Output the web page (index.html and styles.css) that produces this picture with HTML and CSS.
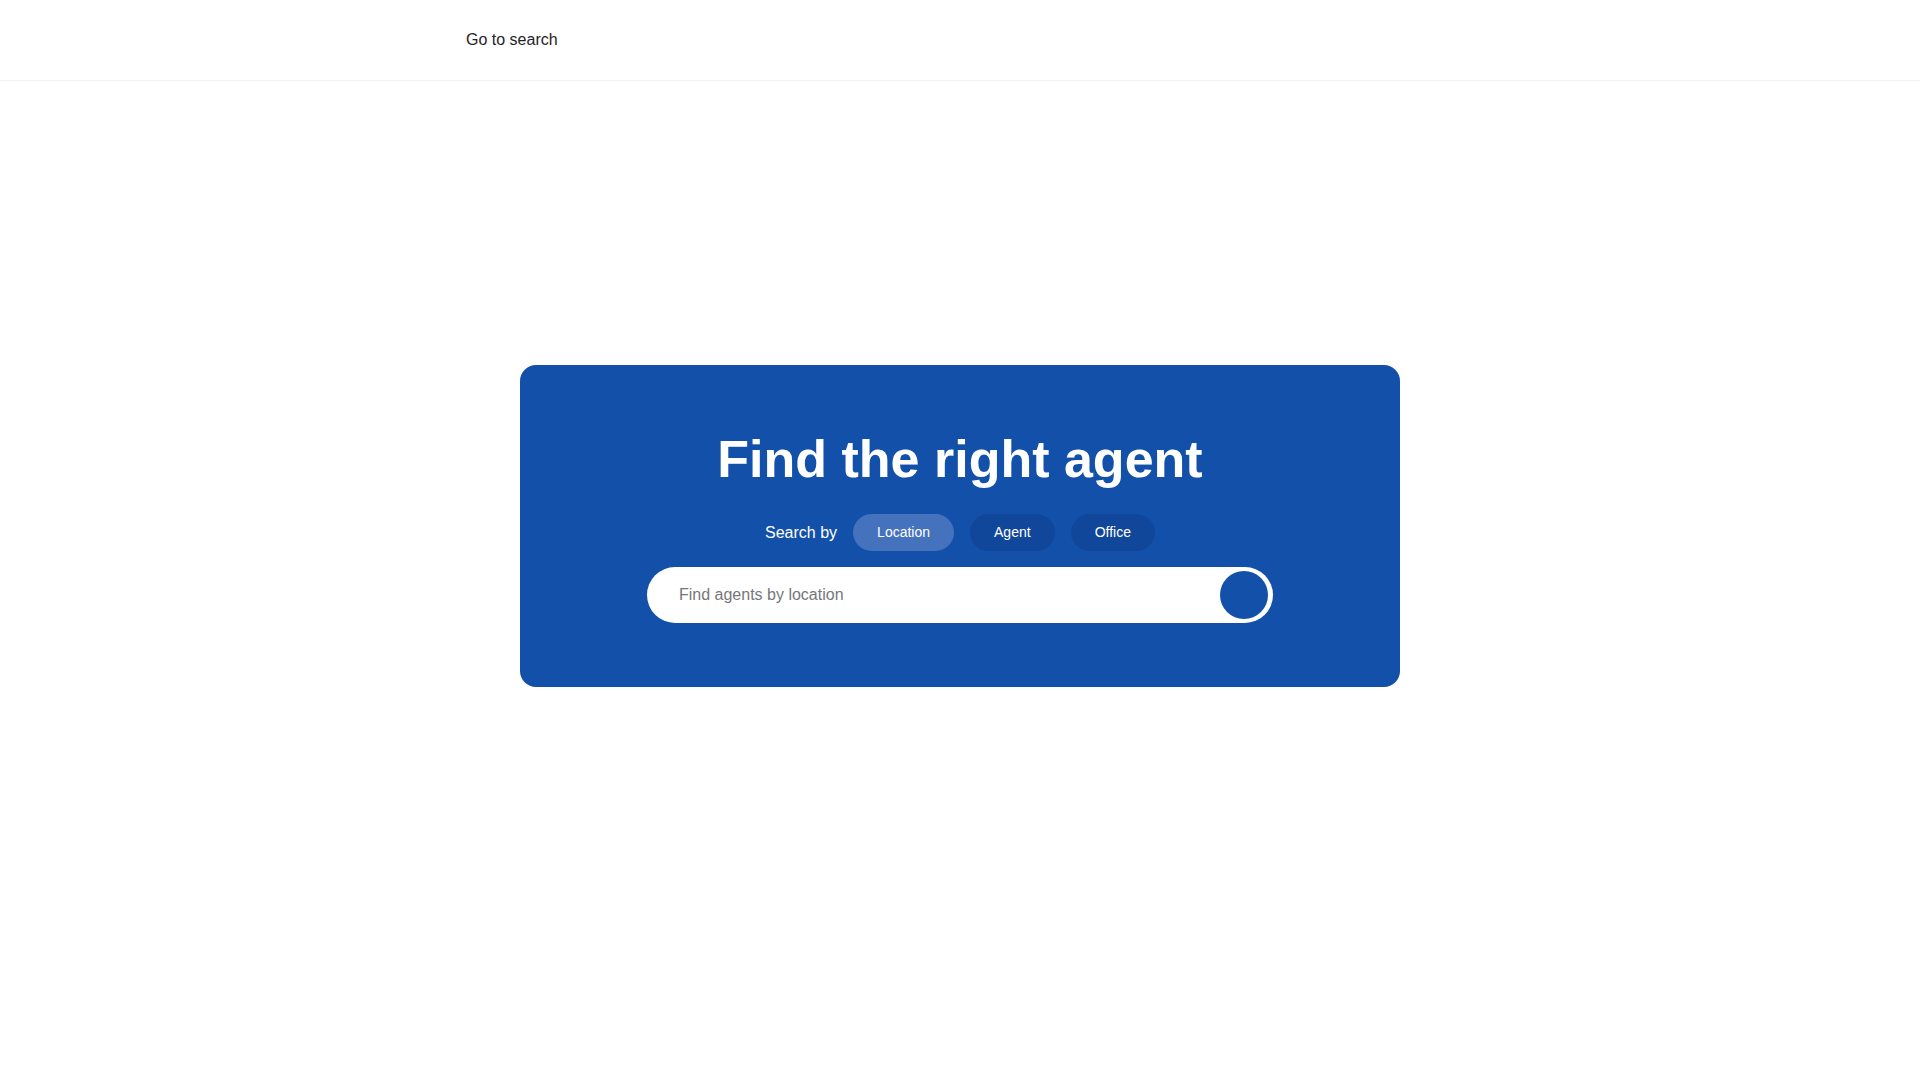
FILE: index.html
```html
<!DOCTYPE html>
<html lang="en">
<head>
<meta charset="utf-8">
<title>Find the right agent</title>
<link rel="stylesheet" href="styles.css">
</head>
<body>
<header class="site-header">
  <div class="header-inner">
    <a class="skip-link" href="#search">Go to search</a>
  </div>
</header>
<main class="main">
  <section class="hero">
    <h1 class="hero-title">Find the right agent</h1>
    <div class="search-by">
      <span class="search-by-label">Search by</span>
      <button class="pill pill-active">Location</button>
      <button class="pill">Agent</button>
      <button class="pill">Office</button>
    </div>
    <form class="search-bar" id="search">
      <input class="search-input" type="text" placeholder="Find agents by location">
      <button class="search-btn" type="button" aria-label="Search"></button>
    </form>
  </section>
</main>
</body>
</html>
```
FILE: styles.css
```css
* { box-sizing: border-box; }
html, body { margin: 0; padding: 0; }
body {
  font-family: "Liberation Sans", Arial, sans-serif;
  background: #ffffff;
  color: #1f2328;
}
.site-header {
  height: 81px;
  border-bottom: 1px solid #f2f2f3;
}
.header-inner {
  max-width: 1020px;
  margin: 0 auto;
  padding: 0 16px;
  height: 80px;
  display: flex;
  align-items: center;
}
.skip-link {
  font-size: 16px;
  color: #1f2328;
  text-decoration: none;
}
.main {
  display: flex;
  justify-content: center;
  padding-top: 284px;
}
.hero {
  width: 880px;
  background: #1350a9;
  border-radius: 16px;
  padding: 64px 0;
  display: flex;
  flex-direction: column;
  align-items: center;
}
.hero-title {
  margin: 0 0 25px;
  font-size: 52px;
  line-height: 60px;
  font-weight: 700;
  color: #ffffff;
}
.search-by {
  display: flex;
  align-items: center;
  gap: 16px;
  margin-bottom: 16px;
}
.search-by-label {
  color: #ffffff;
  font-size: 16px;
}
.pill {
  font-family: "Liberation Sans", Arial, sans-serif;
  font-size: 14px;
  line-height: 17px;
  padding: 10px 24px;
  border: none;
  border-radius: 999px;
  color: #ffffff;
  background: #11479a;
  cursor: pointer;
}
.pill-active {
  background: #4472bc;
}
.search-bar {
  width: 626px;
  height: 56px;
  background: #ffffff;
  border-radius: 28px;
  display: flex;
  align-items: center;
  padding: 4px 5px 4px 32px;
  margin: 0;
}
.search-input {
  flex: 1;
  border: none;
  outline: none;
  background: transparent;
  font-family: "Liberation Sans", Arial, sans-serif;
  font-size: 16px;
  color: #1f2328;
  padding: 0;
}
.search-input::placeholder {
  color: #76777a;
}
.search-btn {
  width: 48px;
  height: 48px;
  border-radius: 50%;
  border: none;
  background: #1350a9;
  padding: 0;
  flex: none;
}
```
